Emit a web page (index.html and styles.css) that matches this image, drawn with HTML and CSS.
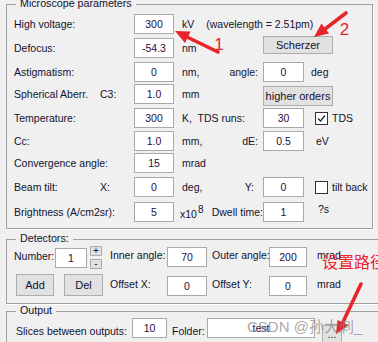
FILE: index.html
```html
<!DOCTYPE html>
<html>
<head>
<meta charset="utf-8">
<title>Microscope parameters</title>
<link rel="stylesheet" href="styles.css">
</head>
<body>
<div class="page">
  <fieldset class="group micro">
    <legend>Microscope parameters</legend>
    <div class="mgrid">
      <div class="row">
        <span class="lbl">High voltage:</span>
        <span class="edit">300</span>
        <span class="unit span3">kV<span class="wl">(wavelength = 2.51pm)</span></span>
      </div>
      <div class="row">
        <span class="lbl">Defocus:</span>
        <span class="edit">-54.3</span>
        <span class="unit">nm</span>
        <span class="btncell"><span class="btn scherzer">Scherzer</span></span>
      </div>
      <div class="row">
        <span class="lbl">Astigmatism:</span>
        <span class="edit">0</span>
        <span class="unit mid"><span>nm,</span><span>angle:</span></span>
        <span class="edit">0</span>
        <span class="tail t-deg">deg</span>
      </div>
      <div class="row">
        <span class="lbl"><span class="lead">Spherical Aberr.</span><span>C3:</span></span>
        <span class="edit">1.0</span>
        <span class="unit">mm</span>
        <span class="btncell"><span class="btn higher">higher orders</span></span>
      </div>
      <div class="row">
        <span class="lbl">Temperature:</span>
        <span class="edit">300</span>
        <span class="unit">K,&nbsp; TDS runs:</span>
        <span class="edit">30</span>
        <span class="tail t-chk"><span class="chk"><svg width="11" height="11" viewBox="0 0 11 11"><polyline points="2,5.5 4.5,8 9,2.5" fill="none" stroke="#222" stroke-width="1.2"/></svg></span><span class="chklbl">TDS</span></span>
      </div>
      <div class="row">
        <span class="lbl">Cc:</span>
        <span class="edit">1.0</span>
        <span class="unit mid"><span>mm,</span><span>dE:</span></span>
        <span class="edit">0.5</span>
        <span class="tail t-ev">eV</span>
      </div>
      <div class="row">
        <span class="lbl">Convergence angle:</span>
        <span class="edit">15</span>
        <span class="unit">mrad</span>
      </div>
      <div class="row">
        <span class="lbl"><span class="lead">Beam tilt:</span><span>X:</span></span>
        <span class="edit">0</span>
        <span class="unit mid"><span>deg,</span><span class="y">Y:</span></span>
        <span class="edit">0</span>
        <span class="tail t-chk"><span class="chk"></span><span class="chklbl">tilt back</span></span>
      </div>
      <div class="row">
        <span class="lbl">Brightness (A/cm2sr):</span>
        <span class="edit">5</span>
        <span class="unit mid pow"><span class="x10">x10<sup>8</sup></span><span>Dwell time:</span></span>
        <span class="edit">1</span>
        <span class="tail t-s">?s</span>
      </div>
    </div>
  </fieldset>

  <fieldset class="group det">
    <legend>Detectors:</legend>
    <div class="dgrid">
      <div class="row">
        <span class="left">
          <span class="numlbl">Number:</span>
          <span class="edit num">1</span>
          <span class="pm"><span class="btn small">+</span><span class="btn small">-</span></span>
        </span>
        <span class="dl">Inner angle:</span>
        <span class="edit">70</span>
        <span class="dl dl2">Outer angle:</span>
        <span class="edit">200</span>
        <span class="dl dl3">mrad</span>
      </div>
      <div class="row">
        <span class="left">
          <span class="btn add">Add</span>
          <span class="btn del">Del</span>
        </span>
        <span class="dl">Offset X:</span>
        <span class="edit">0</span>
        <span class="dl dl2">Offset Y:</span>
        <span class="edit">0</span>
        <span class="dl dl3">mrad</span>
      </div>
    </div>
  </fieldset>

  <fieldset class="group out">
    <legend>Output</legend>
    <div class="ogrid">
      <span class="ol">Slices between outputs:</span>
      <span class="edit">10</span>
      <span class="ol folder">Folder:</span>
      <span class="edit">test</span>
      <span class="btn dots">...</span>
    </div>
  </fieldset>

  <svg class="annot" width="378" height="342" viewBox="0 0 378 342">
    <g fill="#e9252b" stroke="#e9252b">
      <line x1="218" y1="52" x2="187" y2="37" stroke-width="3.6" stroke-linecap="round"/>
      <polygon points="175,31 190.5,31.5 185,43" stroke="none"/>
      <line x1="346" y1="13" x2="325" y2="29" stroke-width="3.6" stroke-linecap="round"/>
      <polygon points="314,37 329,33.5 321.5,23.5" stroke="none"/>
      <line x1="361" y1="284" x2="343" y2="322" stroke-width="3.6" stroke-linecap="round"/>
      <polygon points="336,334 348.5,325 337.5,320" stroke="none"/>
    </g>
    <text x="219" y="50" class="num1">1</text>
    <text x="344.5" y="35" class="num1">2</text>
    <text x="322" y="268" class="path">设置路径</text>
  </svg>
  <div class="watermark">CSDN @孙大刺_</div>
</div>
</body>
</html>
```

FILE: styles.css
```css
* { box-sizing: border-box; }
html, body { margin: 0; padding: 0; }
body {
  width: 378px;
  height: 342px;
  overflow: hidden;
  background: #f0f0f0;
  font-family: "Liberation Sans", Arial, "Noto Sans CJK SC", sans-serif;
  font-size: 10.5px;
  color: #12122e;
}
.page {
  position: relative;
  width: 378px;
  height: 342px;
  overflow: hidden;
}

/* group boxes */
.group {
  margin: 0 0 0 6px;
  padding: 0;
  border: 1px solid #a0a0a0;
  box-shadow: 1px 1px 0 #ffffff;
  min-inline-size: 0;
}
.group legend {
  margin-left: 9px;
  padding: 0 4px 2px;
  line-height: 11px;
  font-size: 10.7px;
}
.micro { width: 367px; margin-top: -2px; }
.det { width: 390px; margin-top: 4px; }
.out { width: 390px; margin-top: 1px; height: 60px; }

/* common widgets */
.edit {
  display: flex;
  align-items: center;
  justify-content: center;
  height: 20px;
  background: #ffffff;
  border: 1px solid #a9a9a9;
  color: #2a0c40;
  white-space: nowrap;
}
.btn {
  display: flex;
  align-items: center;
  justify-content: center;
  background: #e1e1e1;
  border: 1px solid #adadad;
  color: #12122e;
  font-size: 11px;
  white-space: nowrap;
}
.chk {
  display: inline-flex;
  align-items: center;
  justify-content: center;
  width: 13px;
  height: 13px;
  border: 1px solid #333333;
  background: #ffffff;
  flex-shrink: 0;
}
.chklbl { margin-left: 4px; }

/* microscope parameters grid */
.mgrid {
  display: grid;
  grid-template-columns: 120px 40px 89px 41px 1fr;
  grid-template-rows: 24px 24px 22px 24px 23px 22px 24px 25px 20px;
  padding: 3px 0 6px 7px;
}
.mgrid .row { display: contents; }
.mgrid .row > * {
  height: 20px;
  align-self: start;
  display: flex;
  align-items: center;
  white-space: nowrap;
}
.mgrid .lbl { grid-column: 1; }
.lead { width: 86px; flex-shrink: 0; }
.unit { padding-left: 8px; }
.span3 { grid-column: 3 / 6; }
.wl { margin-left: 12px; }
.mid { justify-content: space-between; padding-right: 5px; }
.mid .y { margin-right: 4px; }
.pow { padding-left: 6px; padding-right: 0; }
.x10 sup { font-size: 10px; margin-left: 1px; }
.btncell { grid-column: 4 / 6; }
.mgrid .row > .btncell { height: auto; }
.scherzer { width: 70px; height: 18px; margin-top: -2px; }
.higher { width: 70px; height: 20px; margin-top: 2px; }
.tail { padding-left: 7px; }
.t-chk { padding-left: 11px; }
.t-ev { padding-left: 12px; }
.t-s { padding-left: 14px; padding-bottom: 6px; }

/* detectors grid */
.dgrid {
  display: grid;
  grid-template-columns: 96px 57px 40px 62px 38px 1fr;
  grid-template-rows: 22px 24px;
  row-gap: 6px;
  padding: 0 0 5px 7px;
}
.dgrid .row { display: contents; }
.dgrid .left { grid-column: 1; display: flex; align-items: flex-start; }
.dgrid .edit { align-self: center; }
.dl { align-self: center; padding-bottom: 4px; white-space: nowrap; }
.dl2 { padding-left: 5px; }
.dl3 { padding-left: 10px; }
.numlbl { width: 41px; align-self: center; padding-bottom: 2px; }
.num { width: 32px; margin-top: 1px; }
.pm { display: flex; flex-direction: column; gap: 3px; margin-left: 3px; }
.small { width: 12px; height: 10px; font-size: 10px; line-height: 8px; }
.add { width: 38px; height: 22px; margin-left: 2px; }
.del { width: 39px; height: 22px; margin-left: 10px; }

/* output */
.ogrid {
  display: grid;
  grid-template-columns: 116px 35px 40px 108px auto;
  grid-template-rows: 20px;
  padding: 0 0 0 9px;
  align-items: end;
}
.ogrid .edit { align-self: stretch; }
.ol { white-space: nowrap; padding-bottom: 1px; }
.folder { padding-left: 5px; }
.dots { width: 20px; height: 18px; margin-left: 7px; margin-top: 7px; align-self: start; font-size: 10px; }

/* overlays */
.annot {
  position: absolute;
  left: 0;
  top: 0;
  pointer-events: none;
}
.num1 {
  fill: #e9252b;
  font-family: "Liberation Sans", Arial, sans-serif;
  font-size: 17px;
  text-anchor: middle;
}
.path {
  fill: #e9252b;
  font-family: "Noto Sans CJK SC", sans-serif;
  font-size: 16px;
}
.watermark {
  position: absolute;
  left: 247px;
  top: 317px;
  font-family: "Liberation Sans", "Noto Sans CJK SC", sans-serif;
  font-size: 15px;
  line-height: 20px;
  color: rgba(130, 130, 130, 0.7);
  white-space: nowrap;
}
```
